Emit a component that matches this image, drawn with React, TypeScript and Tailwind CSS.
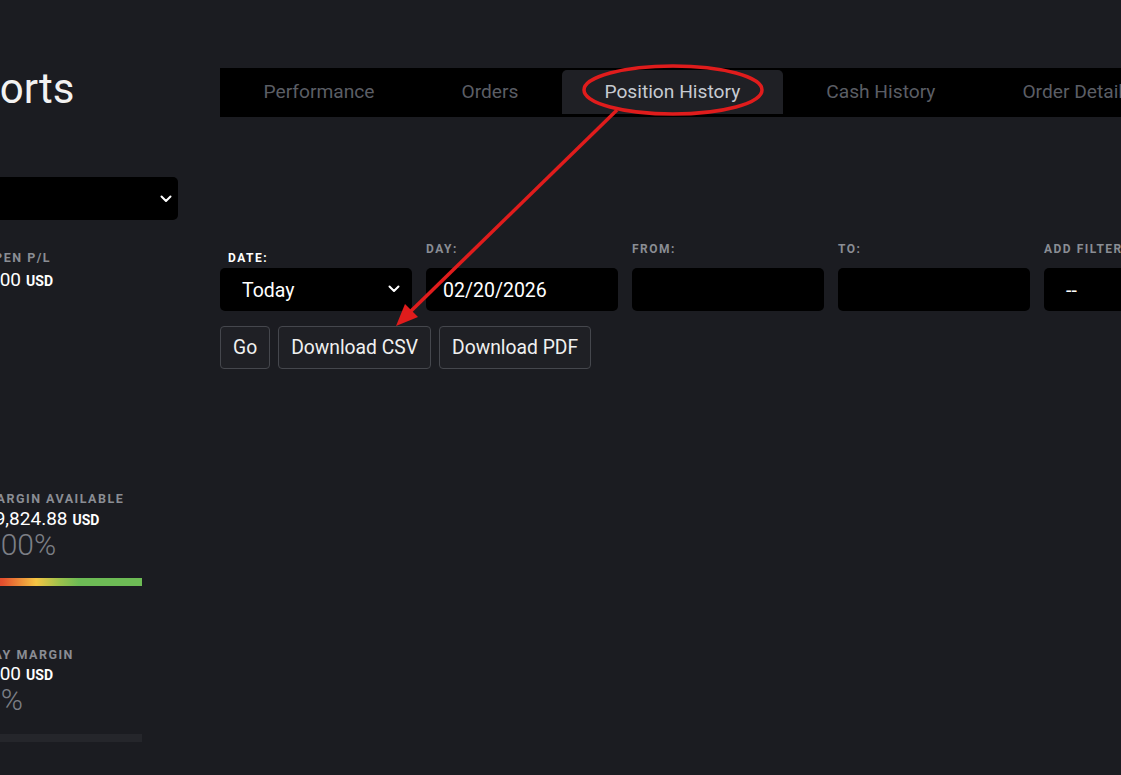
import React from "react";

const tabs = ["Performance", "Orders", "Position History", "Cash History", "Order Details"];

function Chevron({ className }: { className?: string }) {
  return (
    <svg viewBox="0 0 12 8" className={className} fill="none" stroke="currentColor" strokeWidth="2" strokeLinecap="round" strokeLinejoin="round">
      <path d="M1.5 1.5 6 6l4.5-4.5" />
    </svg>
  );
}

function Field({ label, value, white, chevron, pad }: { label: string; value?: string; white?: boolean; chevron?: boolean; pad: string }) {
  return (
    <div className="flex w-[192px] shrink-0 flex-col justify-end">
      <div
        className={
          white
            ? "mb-[4px] pl-[8px] text-[12px] font-bold uppercase leading-[12px] tracking-[1.5px] text-white"
            : "mb-[12.5px] text-[12px] font-bold uppercase leading-[12px] tracking-[1.5px] text-[#8a8d94]"
        }
      >
        {label}
      </div>
      <div className={`${pad} flex h-[43px] items-center justify-between rounded-[5px] bg-black pr-[12px] pt-[3px] text-[19.5px] text-white`}>
        <span>{value}</span>
        {chevron && <Chevron className="-mt-[3px] h-[8px] w-[12px] text-white" />}
      </div>
    </div>
  );
}

function Value({ value, gap }: { value: string; gap: string }) {
  return (
    <div className={`${gap} flex items-baseline gap-[5px] text-white`}>
      <span className="text-[19px] leading-[19px]">{value}</span>
      <span className="text-[14px] font-bold leading-[14px]">USD</span>
    </div>
  );
}

function Label({ children }: { children: React.ReactNode }) {
  return <div className="whitespace-nowrap text-[12.5px] font-bold uppercase leading-[12.5px] tracking-[1.5px] text-[#8a8d94]">{children}</div>;
}

export default function App() {
  return (
    <div className="relative flex h-[775px] w-full overflow-hidden bg-[#1b1c21] font-['Roboto',sans-serif]">
      {/* left summary panel, scrolled partly out of view */}
      <div className="ml-[-16px] w-[194px] shrink-0 pt-[68px]">
        <h1 className="ml-[-56px] whitespace-nowrap text-[42px] font-normal leading-[42px] text-[#f2f2f2]">Reports</h1>
        <div className="mt-[67px] flex h-[43px] items-center justify-end rounded-[5px] bg-black pr-[6px]">
          <Chevron className="h-[8px] w-[12px] text-white" />
        </div>

        <div className="mt-[32px]">
          <Label>Open P/L</Label>
          <Value value="0.00" gap="mt-[5px]" />
        </div>

        <div className="mt-[204px]">
          <Label>Margin Available</Label>
          <Value value="49,824.88" gap="mt-[4px]" />
          <div className="mt-[2px] text-[30px] font-light leading-[30px] text-[#7c7f86]">100%</div>
          <div className="mt-[18px] h-[8px] w-[158px] bg-[linear-gradient(to_right,#d3352a_0%,#e5512e_12%,#f5c544_33%,#9cc24c_48%,#6dbb55_60%,#6dbb55_100%)]" />
        </div>

        <div className="mt-[63px]">
          <Label>Day Margin</Label>
          <Value value="0.00" gap="mt-[2px]" />
          <div className="mt-[2px] text-[30px] font-light leading-[30px] text-[#7c7f86]">0%</div>
          <div className="mt-[19px] h-[8px] w-[158px] bg-[#25262b]" />
        </div>
      </div>

      {/* main content */}
      <div className="ml-[42px] w-[1100px] shrink-0 pt-[68px]">
        <div className="flex h-[49px] bg-black pb-[3px] pt-[2px]">
          {tabs.map((t) => (
            <div
              key={t}
              className={
                t === "Position History"
                  ? "flex h-[44px] items-center whitespace-nowrap rounded-t-[5px] bg-[#1f2025] px-[42.5px] text-[19.2px] text-[#c6cad1]"
                  : "flex h-[44px] items-center whitespace-nowrap px-[43.5px] text-[19.2px] text-[#5b5e65]"
              }
            >
              {t}
            </div>
          ))}
        </div>

        <div className="mt-[126px] flex items-end gap-[14px]">
          <Field label="Date:" value="Today" white chevron pad="pl-[22px]" />
          <Field label="Day:" value="02/20/2026" pad="pl-[17px]" />
          <Field label="From:" pad="pl-[22px]" />
          <Field label="To:" pad="pl-[22px]" />
          <Field label="Add Filter:" value="--" pad="pl-[22px]" />
        </div>

        <div className="mt-[15px] flex gap-[8px]">
          {["Go", "Download CSV", "Download PDF"].map((b) => (
            <button
              key={b}
              className="h-[43px] rounded-[4px] border border-[#45474d] bg-[#1f2025] px-[12px] pt-[2px] text-[19.3px] text-[#f0f0f0]"
            >
              {b}
            </button>
          ))}
        </div>
      </div>

      {/* red annotation */}
      <svg className="pointer-events-none absolute left-0 top-0" width="1121" height="775" viewBox="0 0 1121 775">
        <ellipse cx="673" cy="90" rx="89" ry="24" fill="none" stroke="#e01c1c" strokeWidth="3.5" />
        <line x1="617" y1="110" x2="410" y2="312" stroke="#e01c1c" strokeWidth="3.5" />
        <polygon points="396,326 418,317 405,304" fill="#e01c1c" />
      </svg>
    </div>
  );
}
